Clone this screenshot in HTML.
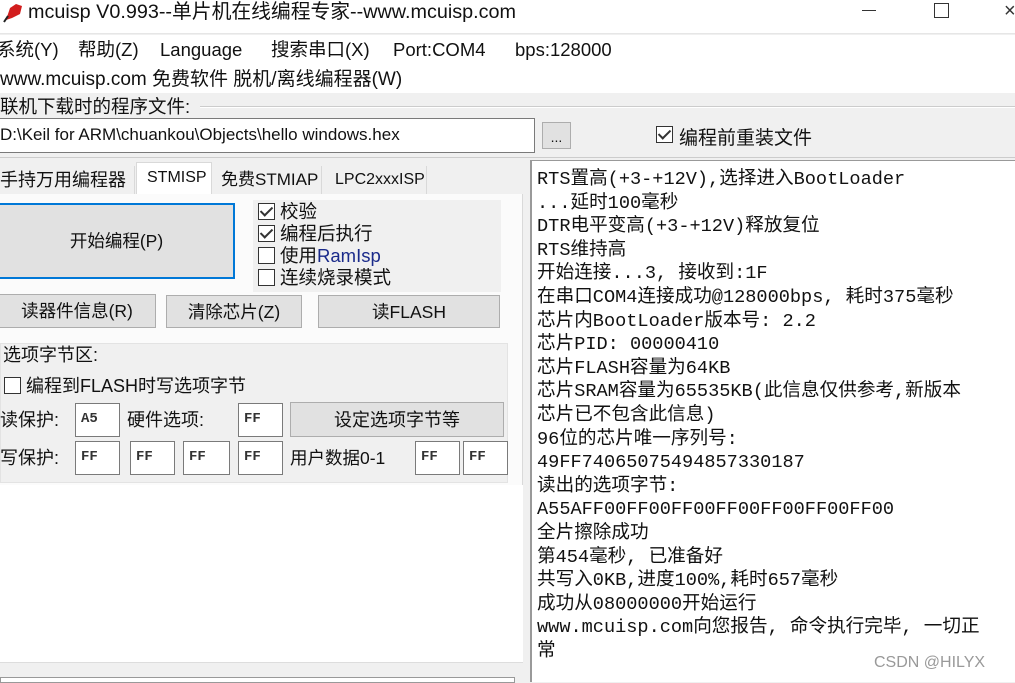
<!DOCTYPE html>
<html><head><meta charset="utf-8"><style>
*{margin:0;padding:0;box-sizing:border-box}
body{width:1015px;height:682px;overflow:hidden;background:#f0f0f0;position:relative;font-family:"Liberation Sans","Noto Sans CJK SC",sans-serif;font-size:17.5px;color:#111}
.a{position:absolute;white-space:nowrap}
.btn{position:absolute;background:#e1e1e1;border:1px solid #adadad;text-align:center}
.box{position:absolute;background:#fff;border:1px solid #7a7a7a;font-family:"Liberation Mono",monospace;font-size:14px;font-weight:bold;padding:7px 0 0 5px;color:#333}
.cb{position:absolute;width:17px;height:17px;border:1px solid #333;background:#fff}
.ck::after{content:"";position:absolute;left:4px;top:0px;width:5px;height:10px;border:solid #333;border-width:0 2px 2px 0;transform:rotate(45deg)}
.log{position:absolute;left:537px;top:168px;font-family:"Liberation Mono","Noto Sans CJK SC",monospace;font-size:18.6px;line-height:23.6px;color:#111;white-space:pre}
.m{position:absolute;top:38px;line-height:24px;font-size:18.5px;white-space:nowrap}
</style></head><body>
<div class="a" style="left:0;top:0;width:1015px;height:34px;background:#fff;border-bottom:1px solid #e6e6e6"></div>
<svg class="a" style="left:2px;top:2px" width="22" height="22" viewBox="0 0 22 22"><path d="M4 18 L8 6 L14 2 L20 4 L18 12 L10 16 Z" fill="#d21d1d"/><path d="M2 20 L6 14" stroke="#222" stroke-width="2"/></svg>
<div class="a" style="left:28px;top:0;font-size:19.8px;line-height:24px">mcuisp V0.993--单片机在线编程专家--www.mcuisp.com</div>
<div class="a" style="left:862px;top:10px;width:14px;height:1px;background:#333"></div>
<div class="a" style="left:934px;top:3px;width:15px;height:15px;border:1px solid #333"></div>
<div class="a" style="left:1004px;top:0;font-size:20px;color:#333">×</div>
<div class="a" style="left:0;top:35px;width:1015px;height:58px;background:#fff"></div>
<div class="m" style="left:-3px">系统(Y)</div>
<div class="m" style="left:78px">帮助(Z)</div>
<div class="m" style="left:160px">Language</div>
<div class="m" style="left:271px">搜索串口(X)</div>
<div class="m" style="left:393px">Port:COM4</div>
<div class="m" style="left:515px">bps:128000</div>
<div class="a" style="left:0;top:68px;line-height:24px;font-size:19px">www.mcuisp.com 免费软件 脱机/离线编程器(W)</div>
<div class="a" style="left:0;top:96px;line-height:22px;font-size:18.5px">联机下载时的程序文件:</div>
<div class="a" style="left:200px;top:106px;width:815px;height:2px;border-top:1px solid #ccc;border-bottom:1px solid #fff"></div>
<div class="a" style="left:0;top:118px;width:535px;height:35px;background:#fff;border:1px solid #7a7a7a;border-left:none;padding:6px 0 0 0;font-size:17px">D:\Keil for ARM\chuankou\Objects\hello windows.hex</div>
<div class="btn" style="left:542px;top:122px;width:29px;height:27px;font-size:14px;line-height:28px">...</div>
<div class="cb ck" style="left:656px;top:126px"></div>
<div class="a" style="left:679px;top:123px;font-size:19px">编程前重装文件</div>
<div class="a" style="left:0;top:157px;width:1015px;height:1px;background:#ccc"></div>
<!-- tabs -->
<div class="a" style="left:0;top:166px;width:135px;height:28px;border-right:1px solid #d9d9d9;font-size:18px;line-height:28px">手持万用编程器</div>
<div class="a" style="left:136px;top:162px;width:76px;height:32px;background:#fff;border:1px solid #d9d9d9;border-bottom:none;font-size:16px;line-height:30px;padding-left:10px">STMISP</div>
<div class="a" style="left:212px;top:166px;width:110px;height:28px;border-right:1px solid #d9d9d9;font-size:17px;line-height:28px;padding-left:9px">免费STMIAP</div>
<div class="a" style="left:322px;top:166px;width:105px;height:28px;border-right:1px solid #d9d9d9;font-size:16px;line-height:28px;padding-left:13px">LPC2xxxISP</div>
<div class="a" style="left:0;top:194px;width:523px;height:469px;background:#fbfbfb;border-right:1px solid #d9d9d9"></div>
<div class="btn" style="left:-2px;top:203px;width:237px;height:76px;border:2px solid #0078d7;line-height:72px">开始编程(P)</div>
<div class="a" style="left:253px;top:200px;width:248px;height:92px;background:#f0f0f0"></div>
<div class="cb ck" style="left:258px;top:203px"></div><div class="a" style="left:280px;top:200px;line-height:24px;font-size:18.5px">校验</div>
<div class="cb ck" style="left:258px;top:225px"></div><div class="a" style="left:280px;top:222px;line-height:24px;font-size:18.5px">编程后执行</div>
<div class="cb" style="left:258px;top:247px"></div><div class="a" style="left:280px;top:244px;line-height:24px;font-size:18.5px">使用<span style="color:#1a2a8a">RamIsp</span></div>
<div class="cb" style="left:258px;top:269px"></div><div class="a" style="left:280px;top:266px;line-height:24px;font-size:18.5px">连续烧录模式</div>
<div class="btn" style="left:-2px;top:294px;width:158px;height:34px;line-height:32px">读器件信息(R)</div>
<div class="btn" style="left:166px;top:295px;width:136px;height:33px;line-height:32px">清除芯片(Z)</div>
<div class="btn" style="left:318px;top:295px;width:182px;height:33px;line-height:32px">读FLASH</div>
<div class="a" style="left:0;top:343px;width:508px;height:140px;background:#f0f0f0;border:1px solid #e3e3e3"></div>
<div class="a" style="left:3px;top:343px;line-height:24px;font-size:18px">选项字节区:</div>
<div class="cb" style="left:4px;top:377px"></div><div class="a" style="left:26px;top:374px;line-height:24px;font-size:18px">编程到FLASH时写选项字节</div>
<div class="a" style="left:0;top:408px;line-height:24px;font-size:18px">读保护:</div>
<div class="box" style="left:75px;top:403px;width:45px;height:34px">A5</div>
<div class="a" style="left:127px;top:408px;line-height:24px;font-size:18px">硬件选项:</div>
<div class="box" style="left:238px;top:403px;width:45px;height:34px">FF</div>
<div class="btn" style="left:290px;top:402px;width:214px;height:35px;line-height:34px;font-size:18px">设定选项字节等</div>
<div class="a" style="left:0;top:446px;line-height:24px;font-size:18px">写保护:</div>
<div class="box" style="left:75px;top:441px;width:45px;height:34px">FF</div>
<div class="box" style="left:130px;top:441px;width:45px;height:34px">FF</div>
<div class="box" style="left:183px;top:441px;width:47px;height:34px">FF</div>
<div class="box" style="left:238px;top:441px;width:45px;height:34px">FF</div>
<div class="a" style="left:290px;top:446px;line-height:24px">用户数据0-1</div>
<div class="box" style="left:415px;top:441px;width:45px;height:34px">FF</div>
<div class="box" style="left:463px;top:441px;width:45px;height:34px">FF</div>
<div class="a" style="left:0;top:485px;width:523px;height:178px;background:#fff;border-bottom:1px solid #ddd"></div>
<div class="a" style="left:0;top:677px;width:515px;height:6px;background:#fff;border:1px solid #999"></div>
<!-- log -->
<div class="a" style="left:530px;top:160px;width:485px;height:522px;background:#fff;border-left:2px solid #999;border-top:1px solid #999"></div>
<div class="log">RTS置高(+3-+12V),选择进入BootLoader
...延时100毫秒
DTR电平变高(+3-+12V)释放复位
RTS维持高
开始连接...3, 接收到:1F
在串口COM4连接成功@128000bps, 耗时375毫秒
芯片内BootLoader版本号: 2.2
芯片PID: 00000410
芯片FLASH容量为64KB
芯片SRAM容量为65535KB(此信息仅供参考,新版本
芯片已不包含此信息)
96位的芯片唯一序列号:
49FF74065075494857330187
读出的选项字节:
A55AFF00FF00FF00FF00FF00FF00FF00
全片擦除成功
第454毫秒, 已准备好
共写入0KB,进度100%,耗时657毫秒
成功从08000000开始运行
www.mcuisp.com向您报告, 命令执行完毕, 一切正
常</div>
<div class="a" style="left:874px;top:654px;font-size:16px;color:#999">CSDN @HILYX</div>
</body></html>
